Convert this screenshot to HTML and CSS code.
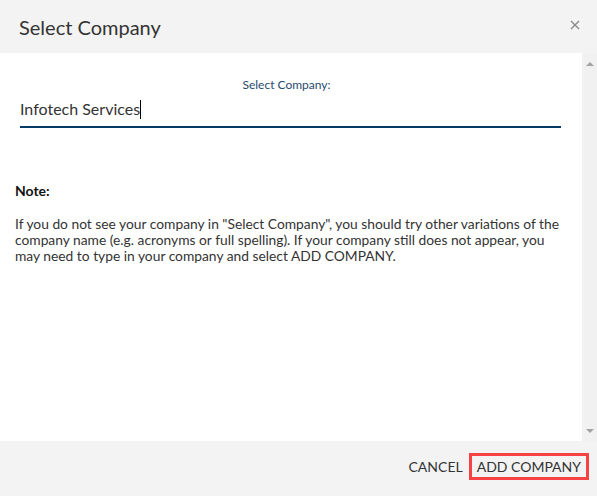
FILE: index.html
```html
<!DOCTYPE html>
<html>
<head>
<meta charset="utf-8">
<link rel="stylesheet" href="styles.css">
</head>
<body>
<div class="modal">
  <div class="modal-header">
    <h1 class="modal-title">Select Company</h1>
    <svg class="close" width="10" height="10" viewBox="0 0 10 10"><path d="M1 1L9 9M9 1L1 9" stroke="#8a8a8a" stroke-width="1.4" fill="none"/></svg>
  </div>
  <div class="modal-body">
    <div class="content">
      <div class="field">
        <label class="field-label">Select Company:</label>
        <div class="field-input">Infotech Services<span class="caret"></span></div>
      </div>
      <div class="note">
        <p class="note-title">Note:</p>
        <p class="note-text">If you do not see your company in "Select Company", you should try other variations of the company name (e.g. acronyms or full spelling). If your company still does not appear, you may need to type in your company and select ADD COMPANY.</p>
      </div>
    </div>
    <div class="scrollbar">
      <span class="arrow up"></span>
      <span class="arrow down"></span>
    </div>
  </div>
  <div class="modal-footer">
    <button class="btn btn-plain">CANCEL</button>
    <button class="btn btn-highlight">ADD COMPANY</button>
  </div>
</div>
</body>
</html>
```

FILE: styles.css
```css
* { box-sizing: border-box; }
html, body { margin: 0; padding: 0; }
body {
  font-family: Lato, "Open Sans", sans-serif;
  color: #333;
  background: #fff;
}
.modal {
  width: 597px;
  height: 496px;
  display: flex;
  flex-direction: column;
}
.modal-header {
  height: 53px;
  flex: none;
  background: #f3f3f3;
  display: flex;
  align-items: center;
  justify-content: space-between;
  padding: 0 17px 0 19px;
}
.modal-title {
  margin: 0;
  font-size: 20px;
  font-weight: 400;
  color: #333;
}
.close {
  display: block;
  margin-top: -4px;
}
.modal-body {
  flex: 1;
  display: flex;
  min-height: 0;
}
.content {
  flex: 1;
  padding: 25px 21px 0 15px;
}
.scrollbar {
  width: 15px;
  flex: none;
  background: #f1f1f1;
  display: flex;
  flex-direction: column;
  justify-content: space-between;
  align-items: center;
  padding: 9px 0 8px;
}
.arrow {
  width: 0;
  height: 0;
  border-left: 4px solid transparent;
  border-right: 4px solid transparent;
}
.arrow.up { border-bottom: 4px solid #a3a3a3; }
.arrow.down { border-top: 4px solid #a3a3a3; }
.field {
  padding-left: 5px;
  display: flex;
  flex-direction: column;
}
.field-label {
  font-size: 12px;
  color: #274a70;
  text-align: center;
  padding-right: 8px;
  line-height: 13px;
}
.field-input {
  margin-top: 6px;
  font-size: 16px;
  line-height: 24px;
  color: #333;
  padding-bottom: 5px;
  border-bottom: 2px solid #063a66;
  display: flex;
  align-items: center;
}
.caret {
  display: inline-block;
  width: 1px;
  height: 19px;
  background: #000;
}
.note { margin-top: 54px; }
.note-title {
  margin: 0;
  font-size: 14px;
  font-weight: 700;
  color: #111;
  line-height: 18px;
}
.note-text {
  margin: 16px -3px 0 0;
  font-size: 13.8px;
  line-height: 16px;
  color: #333;
}
.modal-footer {
  height: 55px;
  flex: none;
  background: #f3f3f3;
  display: flex;
  align-items: center;
  justify-content: flex-end;
  padding: 0 8px 4px 0;
}
.btn {
  font-family: Lato, "Open Sans", sans-serif;
  font-size: 14px;
  color: #333;
  background: transparent;
  border: 3px solid transparent;
  line-height: 17px;
  cursor: pointer;
}
.btn-plain {
  padding: 2px 6px 2px 0;
  border-right: 0;
}
.btn-highlight {
  border-color: #f54343;
  padding: 2px 5px 2px 5px;
}
```
